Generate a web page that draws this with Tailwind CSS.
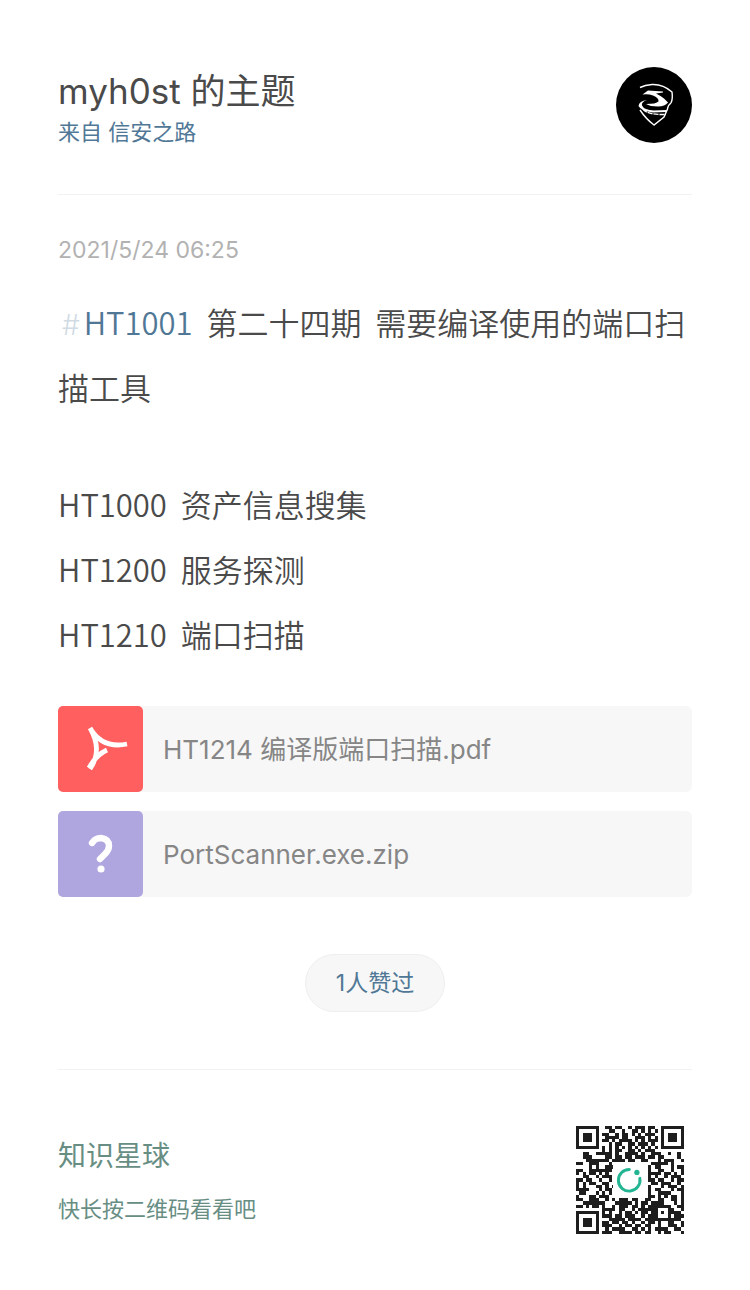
<!DOCTYPE html>
<html lang="zh-CN">
<head>
<meta charset="utf-8">
<meta name="viewport" content="width=device-width, initial-scale=1">
<title>myh0st 的主题</title>
<script src="https://cdn.jsdelivr.net/npm/@tailwindcss/browser@4"></script>
</head>
<body class="bg-white px-[58px] pt-[66px] pb-14 font-['Inter','Noto_Sans_CJK_SC',sans-serif] text-[#4a4a4a]">
<header class="flex items-start justify-between border-b border-[#f2f2f2] pb-[46px]">
  <div>
    <h1 class="text-[35px] leading-[50px]">myh0st 的主题</h1>
    <p class="text-[22px] leading-[32px] text-[#507896]">来自 <a href="#">信安之路</a></p>
  </div>
  <svg class="mt-px size-[76px] shrink-0" viewBox="0 0 76 76" role="img" aria-label="myh0st">
    <circle cx="38" cy="38" r="38"/>
    <g fill="none" stroke="#fff" stroke-width="1.4">
      <path d="M24 20.500Q29 18 36 17.500Q47 17 56 25Q57 32 55 36"/>
      <path d="M55 36Q52 38 51.500 42L48 50L38 58Q30 52 24 43"/>
      <path d="M27 42Q31 48 50 47.500" stroke-dasharray="5 1"/>
    </g>
    <path fill="#fff" d="M26.500 27.500L32 23.500L47 24.500V25.500L40 26.500Q45 29 48 31.500L52 35.500Q49 39.500 42 39.500Q34 39.500 30 37Q40 37 42.500 34.500Q43 31 37 28.500Q32 26.500 26.500 27.500Z"/>
    <path fill="#fff" d="M31 33Q25 35 26 38.500Q28 43 38 43.500L51 43L50 45L37 45.500Q25 44 22.500 39Q23 34 31 33Z"/>
  </svg>
</header>
<main>
  <time class="mt-[39px] block text-[23px] leading-[32px] text-[#b2b2b2]">2021/5/24 06:25</time>
  <div class="mt-[23px] font-['Noto_Sans_CJK_SC',sans-serif] text-[31px] leading-[65px] font-[350] whitespace-pre-wrap"><p><a href="#" class="text-[#507896]"><span class="px-1 font-['Inter',sans-serif] text-[28px] leading-none text-[#d0dbe4]">#</span>HT1001</a>  第二十四期  需要编译使用的端口扫描工具</p><p class="mt-[52px]">HT1000  资产信息搜集</p><p>HT1200  服务探测</p><p>HT1210  端口扫描</p></div>
  <ul class="mt-10 flex flex-col gap-[19px] text-[26px] text-[#868686]">
    <li><a href="#" class="flex h-[86px] items-center rounded-md bg-[#f7f7f7]">
      <svg class="h-[86px] w-[85px] shrink-0" viewBox="0 0 85 86" aria-hidden="true">
        <rect width="85" height="86" rx="5" fill="#ff5f5e"/>
        <path d="M32 22Q44 43 69 38M32 22Q45 44 32 63M31 62Q38 49 49 44" fill="none" stroke="#fff" stroke-width="4.8"/>
      </svg>
      <span class="ml-5">HT1214 编译版端口扫描.pdf</span></a></li>
    <li><a href="#" class="flex h-[86px] items-center rounded-md bg-[#f7f7f7]">
      <svg class="h-[86px] w-[85px] shrink-0" viewBox="0 0 85 86" aria-hidden="true">
        <rect width="85" height="86" rx="5" fill="#afa6df"/>
        <path d="M34 32Q37 27 43 27Q51 28 51 35Q51 39 47 43L42 48" fill="none" stroke="#fff" stroke-width="6.4" stroke-linecap="round"/>
        <circle cx="43" cy="58" r="3.6" fill="#fff"/>
      </svg>
      <span class="ml-5">PortScanner.exe.zip</span></a></li>
  </ul>
  <div class="mt-[57px] flex justify-center">
    <button type="button" class="h-[58px] rounded-full border border-[#efefef] bg-[#f7f7f7] px-[30px] text-[23px] text-[#507896]">1人赞过</button>
  </div>
</main>
<footer class="mt-[57px] flex items-center justify-between border-t border-[#f2f2f2] pt-14 pr-2 text-[#688e84]">
  <div>
    <h2 class="text-[28px] leading-[42px]">知识星球</h2>
    <p class="mt-4 text-[22px] leading-[32px]">快长按二维码看看吧</p>
  </div>
  <svg class="size-[108px] shrink-0" viewBox="0 0 33 33" role="img" aria-label="二维码">
    <path id="modules" fill="#1e1e1e" shape-rendering="crispEdges"/>
    <rect x="11.3" y="11.3" width="10.4" height="10.4" rx="1" fill="#fff"/>
    <path d="M16.3 13.3A3.3 3.3 0 1 0 19.5 16" fill="none" stroke="#23b592" stroke-width=".9" stroke-linecap="round"/>
    <circle cx="18.6" cy="14.2" r=".8" fill="#23b592"/>
  </svg>
</footer>
<script>
const rows = [
"111111100110110010111011001111111",
"100000100011001001101010101000001",
"101110101100101101010111001011101",
"101110100111101100111010101011101",
"101110101101011110101011101011101",
"100000100010110011011101001000001",
"111111101010101010101010101111111",
"000000001010110011010111000000000",
"001100111110100111101001110010010",
"001110000110110110111011011000010",
"000111111101111011001100010111001",
"110011100010000000000001111101000",
"000010100111000000000010110001011",
"110011111110000000000010011001001",
"101011010100000000000011110110101",
"001100101110000000000010100101110",
"110110010010000000000011011001011",
"101011001100000000000001101110010",
"101000110101000000000010001011101",
"111100010110000000000010110001011",
"011000101010000000000010011110001",
"100011011100000000000011010101101",
"110011100101011101100110011001101",
"001111111000111110101101111000101",
"110101101001011101101011111110011",
"000000001111011001011111100011001",
"111111101010010110101101101011110",
"100000101110110111001011100010111",
"101110100011111011110111111111110",
"101110101101101101001011010011001",
"101110101110010110110110010011101",
"100000100101111001101010111100110",
"111111101110011110110110010110001"
];
let d = "";
rows.forEach((r, y) => [...r].forEach((v, x) => { if (v === "1") d += `M${x} ${y}h1v1h-1z`; }));
document.getElementById("modules").setAttribute("d", d);
</script>
</body>
</html>
